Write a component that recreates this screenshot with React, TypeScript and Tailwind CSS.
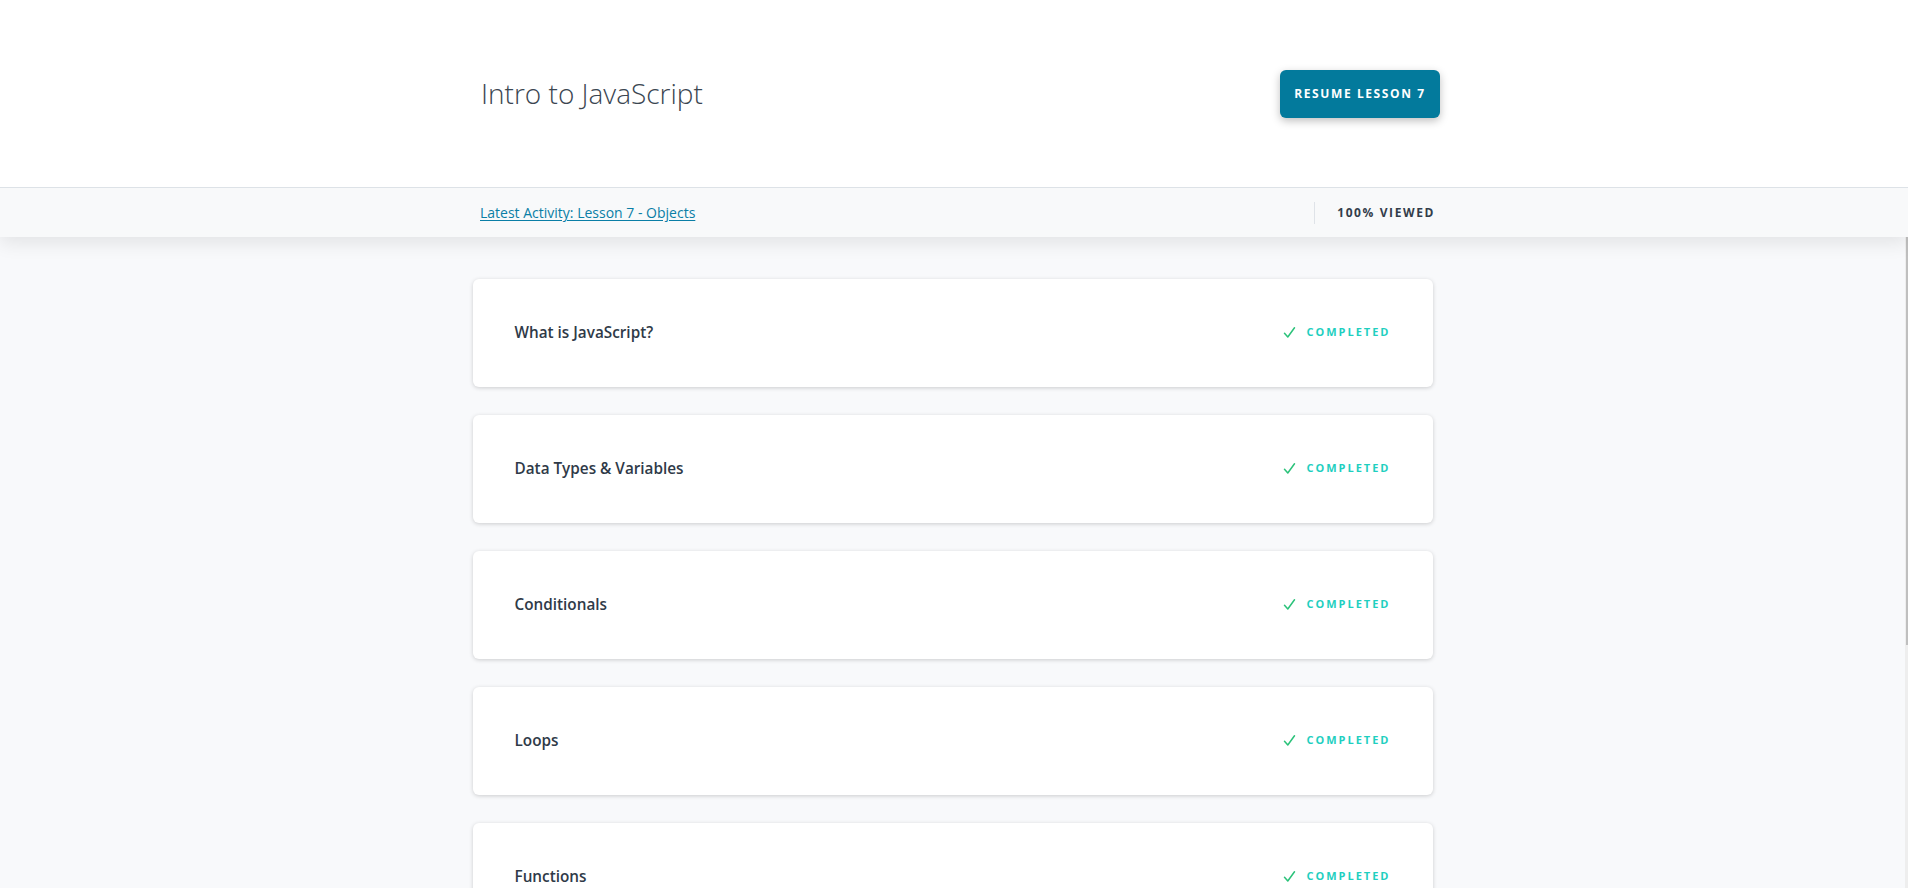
import React from "react";

const lessons = [
  "What is JavaScript?",
  "Data Types & Variables",
  "Conditionals",
  "Loops",
  "Functions",
  "Arrays",
  "Objects",
];

function Check() {
  return (
    <svg width="13" height="13" viewBox="0 0 13 13" fill="none">
      <path d="M1.5 7.2 L4.8 11 L11.5 1.8" stroke="#2bc27a" strokeWidth="1.5" strokeLinecap="round" strokeLinejoin="round" />
    </svg>
  );
}

export default function App() {
  return (
    <div className="flex h-screen w-full flex-col overflow-hidden bg-[#f8f9fb] font-['Open_Sans',sans-serif]">
      <header className="relative z-10 shrink-0 bg-white shadow-[0_6px_18px_rgba(0,0,0,0.09)]">
        <div className="border-b border-[#dde2e7]">
          <div className="mx-auto flex h-[187px] w-[972px] items-center justify-between pl-[13px]">
            <h1 className="mb-[2px] text-[28px] font-light leading-none text-[#3b4651]">Intro to JavaScript</h1>
            <button className="h-[48px] w-[160px] rounded-[6px] bg-[#037a9c] text-[12px] font-bold tracking-[1.6px] text-white shadow-[0_3px_8px_rgba(0,0,0,0.25)]">
              RESUME LESSON 7
            </button>
          </div>
        </div>
        <div className="bg-[#f8f9fa]">
          <div className="mx-auto flex h-[49px] w-[972px] items-center justify-between pl-[12px] pr-[5px]">
            <a href="#" className="text-[14px] text-[#0a7ea6] underline underline-offset-2">
              Latest Activity: Lesson 7 - Objects
            </a>
            <div className="flex h-[22px] items-center border-l border-[#dfe3e8] pl-[22px]">
              <span className="text-[12px] font-bold tracking-[1.6px] text-[#333d4a]">100% VIEWED</span>
            </div>
          </div>
        </div>
      </header>
      <div className="flex min-h-0 flex-1">
        <main className="min-w-0 flex-1 overflow-hidden">
          <div className="mx-auto flex w-[960px] flex-col gap-[28px] pt-[42px]">
            {lessons.map((l) => (
              <div
                key={l}
                className="flex h-[108px] shrink-0 items-center justify-between rounded-[6px] bg-white pl-[42px] pr-[42px] shadow-[0_1px_4px_rgba(0,0,0,0.18)]"
              >
                <span className="pb-[2px] text-[15.3px] font-semibold text-[#2f3a48]">{l}</span>
                <span className="flex items-center gap-[10px] pb-[2px]">
                  <Check />
                  <span className="text-[11px] font-bold tracking-[2px] text-[#1fcfbf]">COMPLETED</span>
                </span>
              </div>
            ))}
          </div>
        </main>
        <div className="flex w-[3px] shrink-0 bg-[#eeeeee]">
          <div className="ml-auto h-[408px] w-[2px] bg-[#bfbfbf]" />
        </div>
      </div>
    </div>
  );
}
